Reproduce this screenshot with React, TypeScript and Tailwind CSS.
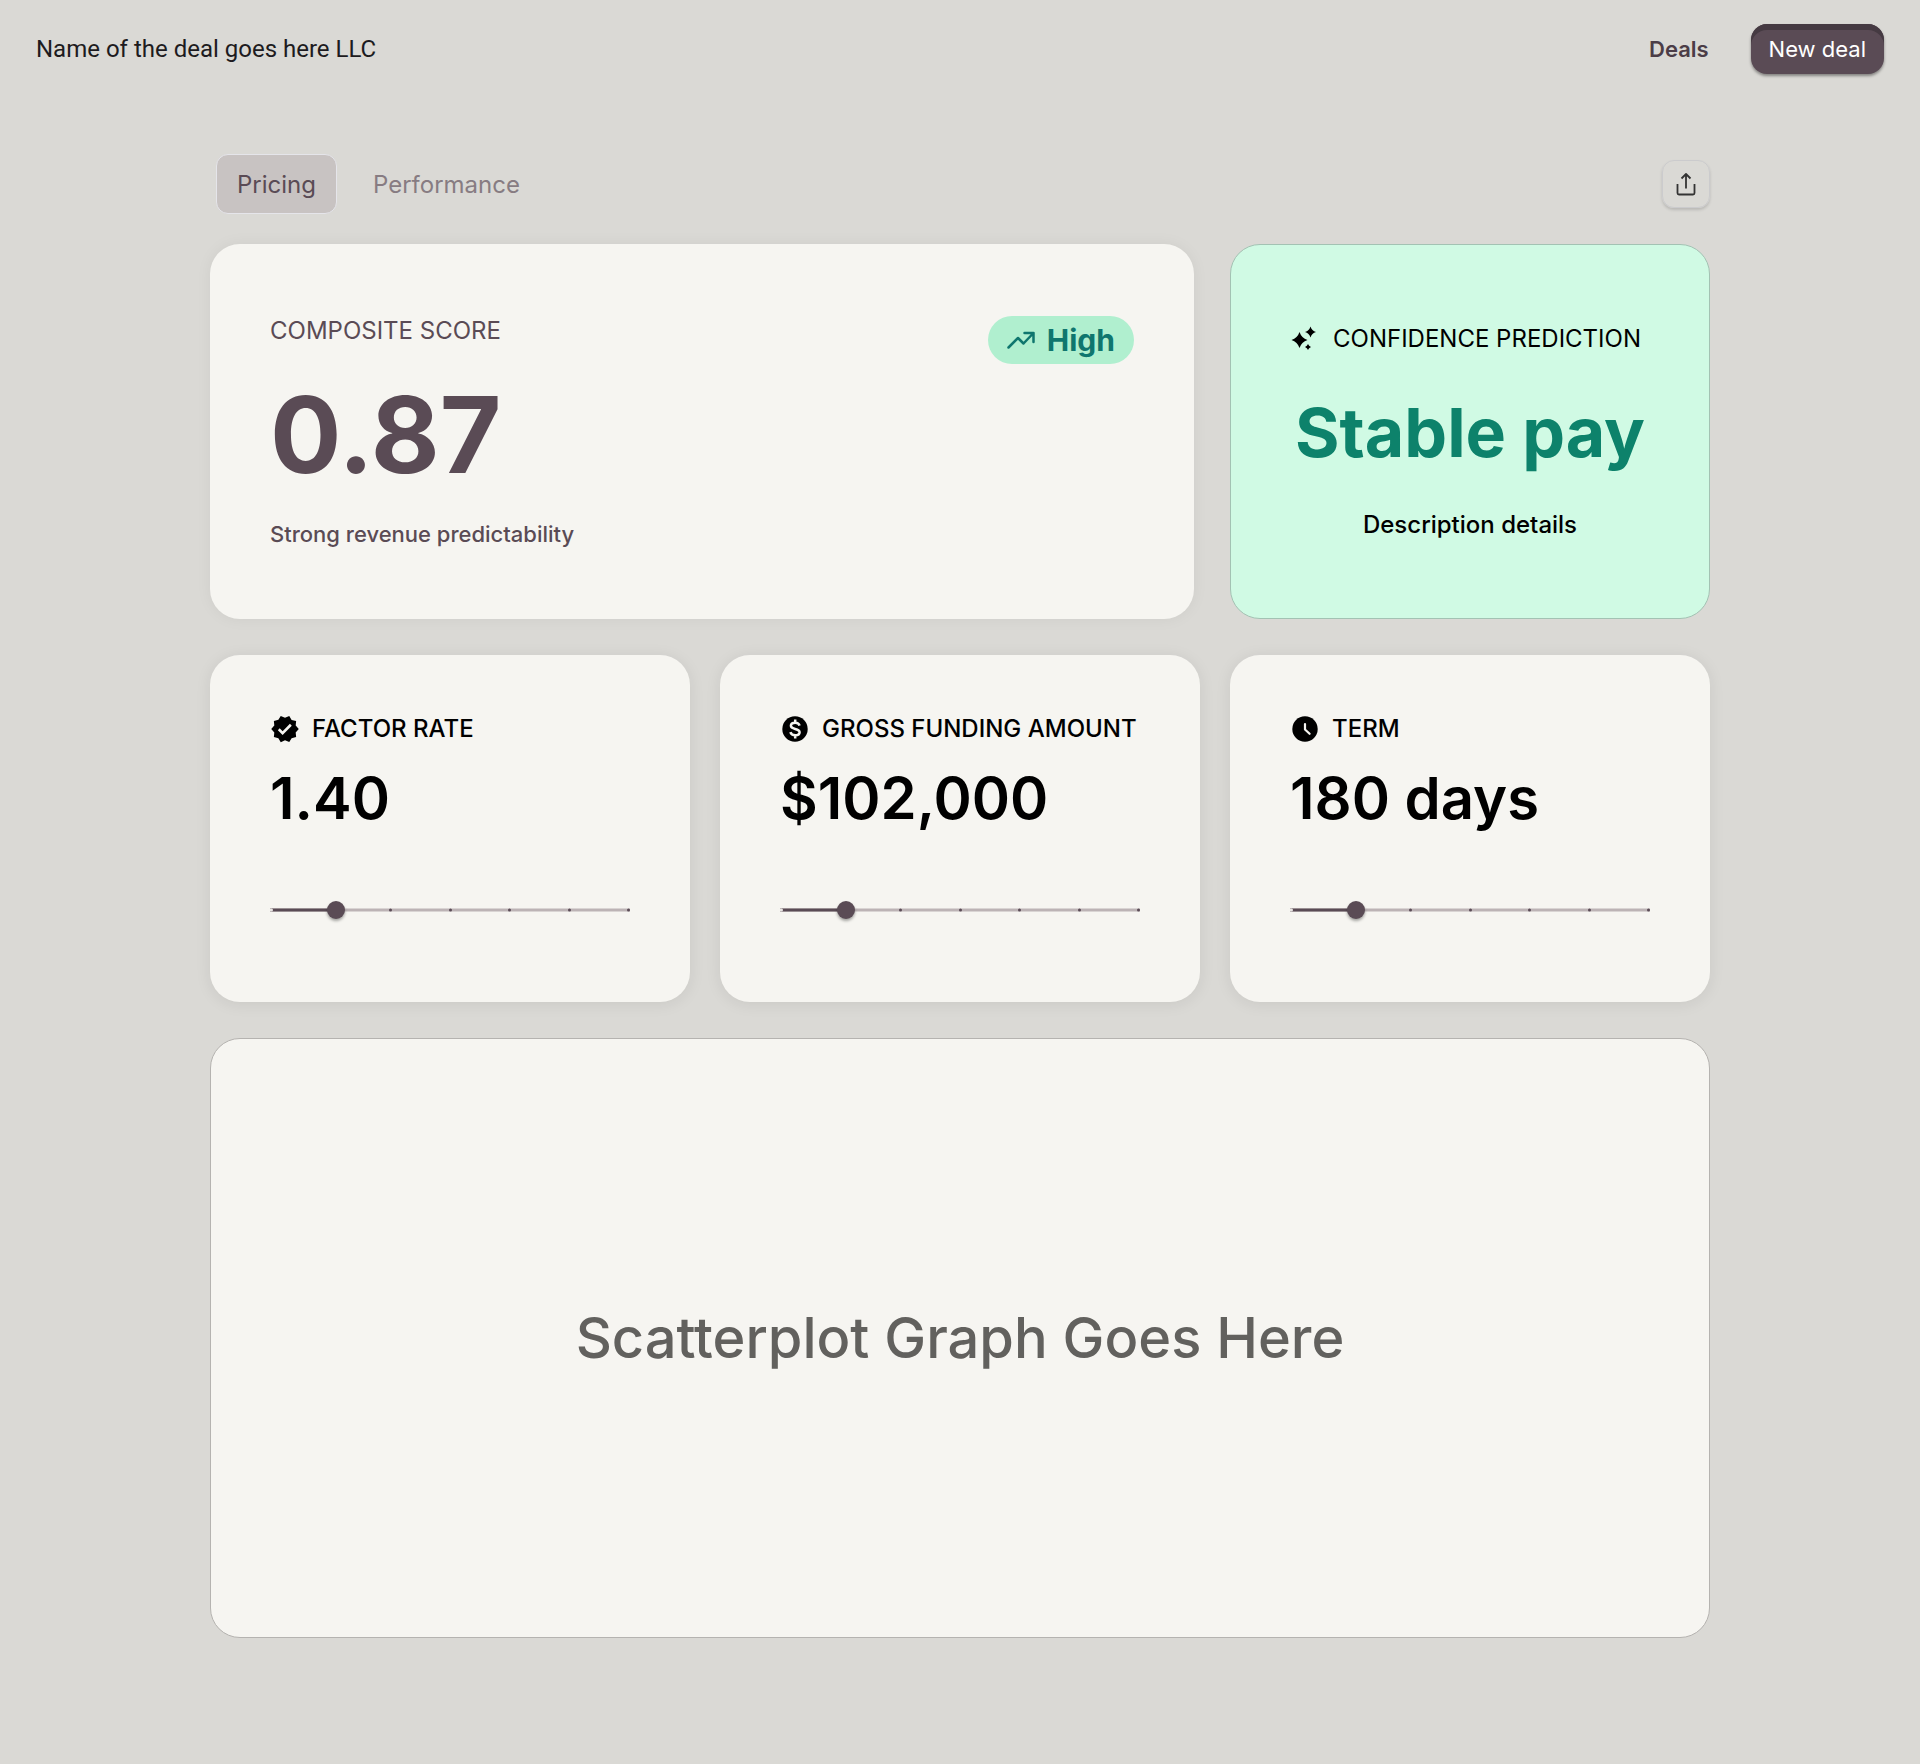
import { useState } from "react";
import { MdVerified } from "react-icons/md";

function SparkleIcon() {
  return (
    <svg viewBox="0 0 30 30" className="size-[30px] shrink-0" fill="currentColor" aria-hidden="true">
      <path d="M8.500 8 Q10.500 14 16.500 16 Q10.500 18 8.500 24 Q6.500 18 .5 16 Q6.500 14 8.500 8Z" />
      <path d="M19.500 2.500 Q20.800 6.700 25 8 Q20.800 9.300 19.500 13.500 Q18.200 9.300 14 8 Q18.200 6.700 19.500 2.500Z" />
      <path d="M17 20 Q17.800 22.200 20 23 Q17.800 23.800 17 26 Q16.200 23.800 14 23 Q16.200 22.200 17 20Z" />
    </svg>
  );
}

function DollarIcon({ className }: { className?: string }) {
  return (
    <svg viewBox="0 0 30 30" className={className} fill="none" aria-hidden="true">
      <circle cx="15" cy="15" r="12.700" fill="currentColor" />
      <path
        d="M19.600 11.700C19 9.700 17.300 8.800 15.200 8.800c-2.700 0-4.300 1.200-4.300 3 0 4.300 8.700 1.900 8.700 6.500 0 2-1.900 3-4.300 3-2.700 0-4.300-1.200-4.900-3.200M15.200 5.600v3M15.200 21.400v3"
        stroke="#f6f5f1"
        strokeWidth="2.500"
      />
    </svg>
  );
}

function ClockIcon({ className }: { className?: string }) {
  return (
    <svg viewBox="0 0 30 30" className={className} fill="none" aria-hidden="true">
      <circle cx="15" cy="15" r="12.700" fill="currentColor" />
      <path d="M15 10v5.500l4.600 4.300" stroke="#f6f5f1" strokeWidth="2.200" strokeLinecap="round" strokeLinejoin="round" />
    </svg>
  );
}

function TrendIcon() {
  return (
    <svg viewBox="0 0 28 18" className="h-[18px] w-7" fill="none" stroke="currentColor" strokeWidth="2.500" strokeLinecap="round" strokeLinejoin="round" aria-hidden="true">
      <path d="M1.500 16.500 11 7l5.500 5.500L26.500 2M17.500 2h9v9" />
    </svg>
  );
}

function ShareIcon() {
  return (
    <svg viewBox="0 0 24 24" className="size-6" fill="none" stroke="currentColor" strokeWidth="1.800" strokeLinejoin="round" aria-hidden="true">
      <path d="M3.500 12v9a1.500 1.500 0 0 0 1.500 1.500h14a1.500 1.500 0 0 0 1.500-1.500v-9M12 16.500V2M7.500 6.500 12 2l4.500 4.500" />
    </svg>
  );
}

const steps = [0, 1, 2, 3, 4, 5, 6];

function StepSlider({ label }: { label: string }) {
  const [value, setValue] = useState(1);
  return (
    <div className="relative h-5 w-full">
      <div className="absolute inset-x-0 top-1/2 h-[3px] -translate-y-1/2 bg-[#bcb3b5]">
        <div className="h-full bg-[#5a4b55]" style={{ width: `${(value / 6) * 100}%` }} />
      </div>
      <div className="absolute inset-x-0 top-1/2 flex -translate-y-1/2 justify-between">
        {steps.map((s) => (
          <span key={s} className="size-[3px] rounded-full bg-[#5a4b55] first:rounded-none first:rounded-r-full first:bg-[#e9e6e4]" />
        ))}
      </div>
      <input
        type="range"
        min={0}
        max={6}
        step={1}
        value={value}
        aria-label={label}
        onChange={(e) => setValue(Number(e.target.value))}
        className="absolute inset-0 m-0 h-5 w-full cursor-pointer appearance-none bg-transparent [&::-webkit-slider-thumb]:size-[18px] [&::-webkit-slider-thumb]:appearance-none [&::-webkit-slider-thumb]:rounded-full [&::-webkit-slider-thumb]:bg-[#5a4b55] [&::-webkit-slider-thumb]:shadow-[0_2px_3px_rgba(0,0,0,0.35)]"
      />
    </div>
  );
}

const metrics = [
  { label: "FACTOR RATE", value: "1.40", Icon: MdVerified },
  { label: "GROSS FUNDING AMOUNT", value: "$102,000", Icon: DollarIcon },
  { label: "TERM", value: "180 days", Icon: ClockIcon },
];

export default function App() {
  const [tab, setTab] = useState("Pricing");
  return (
    <div className="min-h-screen bg-[#dad9d5] pb-32 font-['Inter',sans-serif] text-black">
      <header className="flex h-[98px] items-center justify-between px-9">
        <p className="font-['Roboto',sans-serif] text-2xl text-[#1d1b20]">Name of the deal goes here LLC</p>
        <nav className="flex items-center gap-[42px]">
          <a href="#deals" className="text-[22px] font-semibold text-[#4b3d47]">Deals</a>
          <button className="h-[50px] rounded-2xl bg-[#5a4b55] px-[18px] text-[22px] text-white shadow-[inset_0_6px_0_#453a42,0_2px_3px_rgba(0,0,0,0.4)]">
            New deal
          </button>
        </nav>
      </header>

      <main className="mx-auto max-w-[1572px] px-9">
        <div className="flex items-center justify-between pt-14 pl-1.5">
          <div role="tablist" className="flex">
            {["Pricing", "Performance"].map((t) => (
              <button
                key={t}
                role="tab"
                aria-selected={tab === t}
                onClick={() => setTab(t)}
                className={
                  tab === t
                    ? "h-[60px] rounded-xl border border-[#e5e5ea] bg-[#c8c3c2] px-5 pt-0.5 text-2xl text-[#5a4b55]"
                    : "h-[60px] px-9 pt-0.5 text-2xl text-[#877c82]"
                }
              >
                {t}
              </button>
            ))}
          </div>
          <button aria-label="Share" className="flex size-12 items-center justify-center rounded-xl border border-[#cbcbcd] text-[#333] shadow-[0_2px_3px_rgba(0,0,0,0.15)]">
            <ShareIcon />
          </button>
        </div>

        <div className="mt-[30px] grid grid-cols-[1fr_480px] gap-9">
          <section className="flex h-[375px] items-start justify-between rounded-[30px] bg-[#f6f5f1] px-[60px] pt-[72px] text-[#5a4b55] shadow-[0_0_16px_rgba(0,0,0,0.05)]">
            <div>
              <h2 className="text-2xl leading-[30px]">COMPOSITE SCORE</h2>
              <p className="mt-6 text-[106px] leading-[130px] font-bold">0.87</p>
              <p className="mt-5 text-[22px] leading-7 font-medium">Strong revenue predictability</p>
            </div>
            <div className="flex h-12 items-center gap-3 rounded-full bg-[#b0efcf] px-[19px] text-[30px] font-bold text-[#0f766e]">
              <TrendIcon />
              High
            </div>
          </section>
          <section className="flex h-[375px] flex-col items-center rounded-[30px] border border-[#a3c2b3] bg-[#d0fae4] px-[60px] pt-[79px]">
            <h2 className="flex items-center gap-3 self-start text-2xl leading-[30px] whitespace-nowrap">
              <SparkleIcon />
              CONFIDENCE PREDICTION
            </h2>
            <p className="mt-9 text-[68px] leading-[84px] font-bold whitespace-nowrap text-[#0d826b]">Stable pay</p>
            <p className="mt-9 text-2xl leading-[30px] font-medium">Description details</p>
          </section>
        </div>

        <div className="mt-9 grid grid-cols-3 gap-[30px]">
          {metrics.map(({ label, value, Icon }) => (
            <section key={label} className="flex h-[347px] flex-col rounded-[30px] bg-[#f6f5f1] px-[60px] pt-[59px] shadow-[0_2px_16px_rgba(0,0,0,0.08)]">
              <h2 className="flex items-center gap-3 text-2xl leading-[30px] font-medium whitespace-nowrap">
                <Icon className="size-[30px] shrink-0" />
                {label}
              </h2>
              <p className="mt-4 text-[58px] leading-[76px] font-semibold">{value}</p>
              <div className="mt-16">
                <StepSlider label={label} />
              </div>
            </section>
          ))}
        </div>

        <section className="mt-9 flex h-[600px] items-center justify-center rounded-[30px] border border-[#b5b3b0] bg-[#f6f5f1]">
          <p className="text-[56px] font-medium text-[#62615e]">Scatterplot Graph Goes Here</p>
        </section>
      </main>
    </div>
  );
}
